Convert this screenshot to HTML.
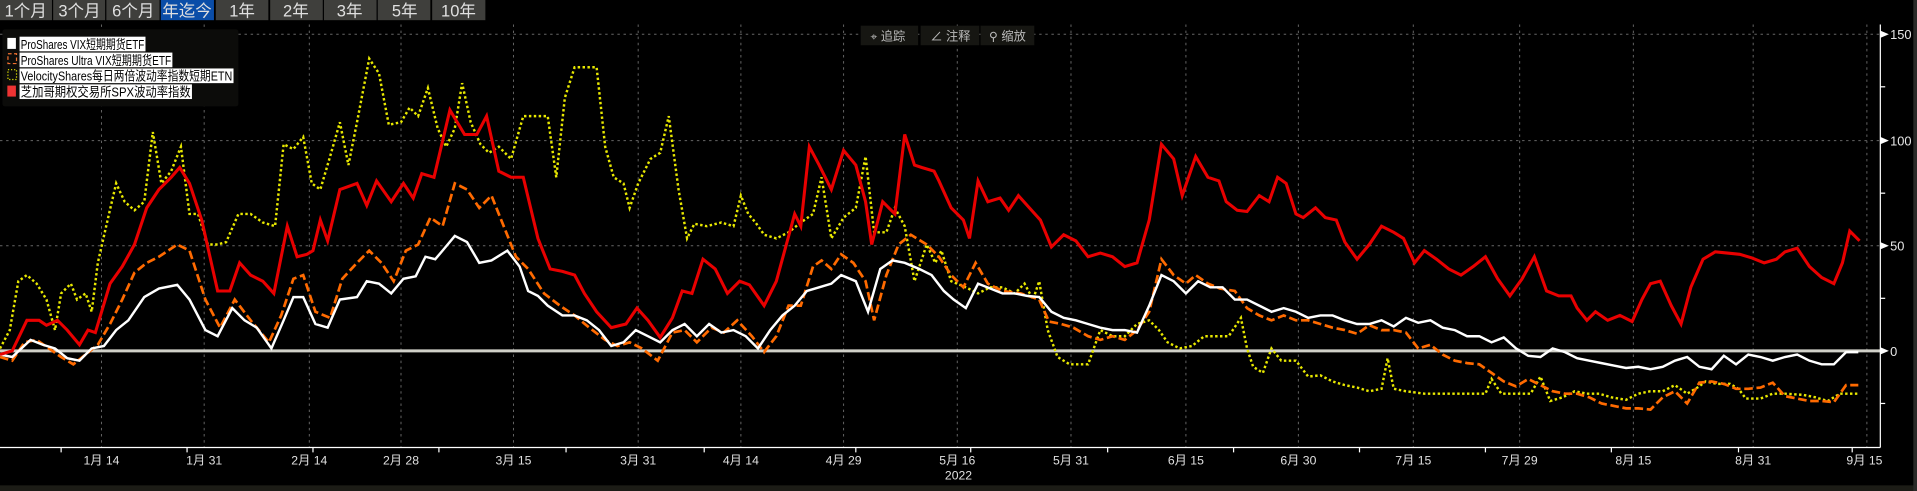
<!DOCTYPE html>
<html><head><meta charset="utf-8"><style>
html,body{margin:0;padding:0;background:#000;overflow:hidden}
svg{display:block}
text{font-family:"Liberation Sans","Noto Sans CJK SC",sans-serif}
</style></head><body>
<svg width="1917" height="491" viewBox="0 0 1568 401.6" preserveAspectRatio="none" xmlns="http://www.w3.org/2000/svg">
<rect width="1568" height="401.6" fill="#000"/>
<g font-size="13.5" fill="#e0e0e0" text-anchor="middle">
<rect x="0" y="0" width="42.5" height="16.5" fill="#3f3f3c"/><text x="21" y="13.5">1个月</text>
<rect x="43.5" y="0" width="42.5" height="16.5" fill="#3f3f3c"/><text x="65" y="13.5">3个月</text>
<rect x="87" y="0" width="43.5" height="16.5" fill="#3f3f3c"/><text x="109" y="13.5">6个月</text>
<rect x="131.5" y="0" width="43.5" height="16.5" fill="#0a4da8"/><text x="153" y="13.5">年迄今</text>
<rect x="176.5" y="0" width="43" height="16.5" fill="#3f3f3c"/><text x="198" y="13.5">1年</text>
<rect x="221" y="0" width="43" height="16.5" fill="#3f3f3c"/><text x="242" y="13.5">2年</text>
<rect x="265" y="0" width="43" height="16.5" fill="#3f3f3c"/><text x="286" y="13.5">3年</text>
<rect x="309" y="0" width="43" height="16.5" fill="#3f3f3c"/><text x="331" y="13.5">5年</text>
<rect x="353.5" y="0" width="43.5" height="16.5" fill="#3f3f3c"/><text x="375" y="13.5">10年</text>
</g>
<g stroke="#666" stroke-width="0.8" stroke-dasharray="2,3">
<line x1="0" y1="28" x2="1538" y2="28"/>
<line x1="0" y1="115" x2="1538" y2="115"/>
<line x1="0" y1="201" x2="1538" y2="201"/>
<line x1="83" y1="20" x2="83" y2="366"/><line x1="167" y1="20" x2="167" y2="366"/>
<line x1="253" y1="20" x2="253" y2="366"/><line x1="328" y1="20" x2="328" y2="366"/>
<line x1="420" y1="20" x2="420" y2="366"/><line x1="522" y1="20" x2="522" y2="366"/>
<line x1="606" y1="20" x2="606" y2="366"/><line x1="690" y1="20" x2="690" y2="366"/>
<line x1="783" y1="20" x2="783" y2="366"/><line x1="876" y1="20" x2="876" y2="366"/>
<line x1="970" y1="20" x2="970" y2="366"/><line x1="1062" y1="20" x2="1062" y2="366"/>
<line x1="1156" y1="20" x2="1156" y2="366"/><line x1="1243" y1="20" x2="1243" y2="366"/>
<line x1="1336" y1="20" x2="1336" y2="366"/><line x1="1434" y1="20" x2="1434" y2="366"/>
<line x1="1527" y1="20" x2="1527" y2="366"/>
</g>
<g font-size="10" fill="#bbb">
<rect x="704" y="21" width="47" height="16" fill="#161612"/><text x="712" y="33">⌖ 追踪</text>
<rect x="753" y="21" width="48" height="16" fill="#161612"/><text x="761" y="33">∠ 注释</text>
<rect x="802" y="21" width="44" height="16" fill="#161612"/><text x="809" y="33">⚲ 缩放</text>
</g>
<line x1="0" y1="287" x2="1538" y2="287" stroke="#d0d0c8" stroke-width="2.4"/>
<polyline fill="none" stroke="#e8e800" stroke-width="2" stroke-dasharray="2,2" points="0,285 8,270 15,230 22,225 30,232 38,245 45,270 50,240 58,232 63,245 70,240 75,255 80,215 88,180 95,150 102,165 110,172 118,165 125,108 132,150 140,140 148,120 155,175 162,175 170,200 178,200 185,198 195,175 205,175 215,182 225,185 232,118 240,122 248,112 255,150 262,155 270,128 278,100 285,135 292,100 302,48 310,60 318,102 328,100 335,88 342,95 350,72 358,105 365,120 372,105 378,68 385,100 393,118 400,125 408,120 418,130 428,95 438,95 448,95 455,145 462,80 470,55 478,55 488,55 495,120 502,145 510,150 515,170 522,150 532,130 540,125 547,95 555,155 562,195 568,183 578,185 590,182 600,185 606,160 612,175 618,182 625,192 635,195 645,190 655,182 665,175 672,145 680,195 690,178 700,170 708,128 715,190 725,190 732,170 740,185 748,230 758,200 765,215 770,205 778,230 790,235 800,240 810,235 820,235 830,240 838,232 845,245 850,230 857,270 865,292 875,298 890,298 900,270 910,275 920,275 930,265 940,262 948,270 955,280 965,285 975,283 985,275 995,275 1005,275 1015,260 1020,285 1025,300 1033,305 1040,285 1048,295 1060,295 1070,308 1080,307 1090,312 1100,315 1110,317 1120,320 1130,318 1135,293 1140,318 1150,320 1165,322 1180,322 1200,322 1215,322 1220,310 1228,322 1240,322 1252,322 1260,308 1268,328 1278,325 1288,320 1298,322 1308,322 1318,325 1330,327 1340,322 1350,320 1360,320 1370,315 1380,322 1390,316 1395,312 1405,314 1415,314 1422,318 1428,326 1440,326 1450,322 1460,322 1475,323 1485,325 1495,328 1505,322 1520,322"/>
<polyline fill="none" stroke="#ff6a00" stroke-width="2.2" stroke-dasharray="7,3" points="0,292 10,295 20,280 30,278 40,285 50,292 60,298 70,290 80,282 90,265 100,245 110,223 120,215 130,210 145,200 155,205 168,245 180,268 192,245 205,262 220,280 230,258 240,228 248,225 258,255 270,260 280,228 292,215 302,205 312,215 322,230 332,205 342,200 352,178 362,185 372,150 382,155 392,170 402,160 412,185 422,210 432,220 445,240 458,250 470,258 482,268 495,278 505,283 515,280 525,285 538,295 550,272 560,270 570,280 582,268 592,272 603,262 615,275 625,288 635,275 645,250 655,250 665,218 672,213 680,220 688,208 698,215 708,230 715,262 725,225 735,200 745,192 758,200 768,210 778,225 788,235 798,215 808,232 820,238 835,240 850,245 858,263 868,265 878,268 890,275 900,278 910,275 920,278 930,270 940,255 950,212 960,225 970,232 978,225 988,232 998,236 1010,238 1020,252 1030,258 1040,262 1050,258 1060,262 1070,262 1080,265 1090,268 1100,270 1110,273 1120,266 1130,270 1140,270 1150,272 1160,285 1170,282 1180,290 1190,295 1200,297 1210,298 1220,305 1230,312 1240,316 1250,310 1260,315 1270,320 1280,322 1290,322 1300,325 1310,330 1320,332 1330,334 1340,334 1350,335 1360,325 1370,320 1380,330 1390,313 1400,312 1410,314 1420,318 1430,318 1440,317 1450,313 1460,324 1470,326 1480,328 1490,328 1500,329 1510,315 1520,315"/>
<polyline fill="none" stroke="#fff" stroke-width="2" points="0,290 10,292 25,278 35,282 45,285 55,293 65,295 75,285 85,283 95,270 105,262 118,243 130,236 145,233 155,245 168,270 178,275 190,252 200,262 210,268 222,285 232,262 240,243 248,243 258,265 268,268 278,245 292,243 300,230 310,232 320,240 330,228 340,226 348,210 356,212 362,205 372,193 382,198 392,215 402,213 415,205 425,218 432,238 440,242 448,250 460,258 470,258 480,262 490,270 500,283 510,280 520,270 530,275 540,280 550,270 560,265 570,275 580,265 590,272 600,270 610,275 620,285 630,270 640,258 650,250 660,238 670,235 680,232 688,225 700,230 710,255 720,220 730,213 740,215 752,220 762,225 772,238 780,245 790,252 800,232 810,236 820,240 830,240 840,242 850,243 860,255 870,260 880,262 890,265 900,268 910,270 920,270 930,272 940,250 950,225 960,230 970,240 980,230 990,235 1000,235 1010,245 1020,245 1030,250 1040,255 1050,252 1060,255 1070,260 1080,258 1090,258 1100,262 1110,265 1120,265 1130,262 1140,267 1150,260 1160,264 1170,262 1180,268 1190,270 1200,275 1210,275 1220,280 1230,276 1240,285 1250,291 1260,292 1270,285 1280,288 1290,293 1300,295 1310,297 1320,299 1330,301 1340,300 1350,302 1360,300 1370,295 1380,292 1390,300 1400,302 1410,291 1420,298 1430,290 1440,292 1450,295 1460,292 1470,290 1480,295 1490,298 1500,298 1510,288 1520,288"/>
<polyline fill="none" stroke="#e80000" stroke-width="2.5" points="0,290 10,287 22,262 32,262 38,266 47,262 55,270 65,282 72,270 78,272 90,232 100,218 110,200 120,170 130,155 140,145 147,137 155,150 165,180 178,238 188,238 196,215 205,225 215,230 224,240 235,185 243,210 251,208 256,205 262,180 268,197 278,155 292,150 300,168 308,148 320,165 330,150 338,162 345,142 355,145 368,90 380,110 390,110 398,95 408,140 418,145 428,145 440,195 450,220 460,222 470,225 478,240 488,255 500,268 512,265 521,252 530,262 540,276 550,260 558,238 566,240 575,212 585,220 595,240 605,230 613,233 625,250 635,230 650,175 655,185 662,120 670,135 680,155 690,123 700,135 708,165 713,200 722,165 732,175 740,110 748,135 754,137 764,140 768,148 778,170 788,180 793,195 800,148 808,165 818,162 825,172 833,160 842,170 851,180 860,202 870,192 880,197 890,210 900,207 910,210 920,218 930,215 940,180 950,118 960,130 967,160 978,128 988,145 997,148 1003,165 1012,172 1020,173 1030,160 1038,165 1045,145 1052,150 1060,175 1066,178 1076,170 1084,178 1093,180 1100,198 1110,212 1120,200 1130,185 1140,190 1148,195 1157,215 1165,205 1175,212 1185,220 1195,225 1205,218 1215,210 1225,228 1235,242 1245,228 1255,210 1265,238 1275,242 1285,242 1290,252 1298,262 1305,255 1315,262 1325,258 1335,263 1343,245 1350,232 1358,230 1367,250 1375,265 1383,235 1393,212 1403,206 1413,207 1423,208 1433,211 1443,215 1453,212 1460,206 1470,203 1480,218 1490,227 1500,232 1507,215 1513,189 1521,197"/>
<rect x="2" y="24" width="193" height="63" rx="2" fill="#0c0c0a"/>
<g font-size="10.5" fill="#000">
<rect x="6" y="31" width="7" height="9" fill="#fff"/>
<rect x="16" y="30" width="103" height="12" fill="#fff"/><text x="17" y="40" textLength="101" lengthAdjust="spacingAndGlyphs">ProShares VIX短期期货ETF</text>
<rect x="6.5" y="44" width="7" height="8" fill="none" stroke="#f07030" stroke-dasharray="3,2"/>
<rect x="16" y="43" width="125" height="12" fill="#fff"/><text x="17" y="53" textLength="123" lengthAdjust="spacingAndGlyphs">ProShares Ultra VIX短期期货ETF</text>
<rect x="6.5" y="57" width="7" height="8" fill="none" stroke="#e8e800" stroke-dasharray="1,1.5"/>
<rect x="16" y="56" width="175" height="12" fill="#fff"/><text x="17" y="66" textLength="173" lengthAdjust="spacingAndGlyphs">VelocityShares每日两倍波动率指数短期ETN</text>
<rect x="6" y="70" width="7" height="9" fill="#ee3333"/>
<rect x="16" y="69" width="141" height="12" fill="#fff"/><text x="17" y="79" textLength="139" lengthAdjust="spacingAndGlyphs">芝加哥期权交易所SPX波动率指数</text>
</g>
<g stroke="#fff" stroke-width="1">
<line x1="1538" y1="20" x2="1538" y2="366"/>
<line x1="1538" y1="71" x2="1542" y2="71"/><line x1="1538" y1="158" x2="1542" y2="158"/>
<line x1="1538" y1="244" x2="1542" y2="244"/><line x1="1538" y1="330" x2="1542" y2="330"/>
<line x1="0" y1="366" x2="1538" y2="366"/>
</g>
<g fill="#fff"><path d="M1538,25 l7,3 l-7,3z"/><path d="M1538,112 l7,3 l-7,3z"/><path d="M1538,198 l7,3 l-7,3z"/><path d="M1538,284 l7,3 l-7,3z"/></g>
<g font-size="10.5" fill="#e8e8e8">
<text x="1546" y="32">150</text><text x="1546" y="119">100</text><text x="1546" y="205">50</text><text x="1546" y="291">0</text>
</g>
<g stroke="#fff" stroke-width="1">
<line x1="50" y1="366" x2="50" y2="370"/><line x1="153" y1="366" x2="153" y2="370"/><line x1="256" y1="366" x2="256" y2="370"/><line x1="359" y1="366" x2="359" y2="370"/><line x1="463" y1="366" x2="463" y2="370"/><line x1="576" y1="366" x2="576" y2="370"/><line x1="700" y1="366" x2="700" y2="370"/><line x1="794" y1="366" x2="794" y2="370"/><line x1="906" y1="366" x2="906" y2="370"/><line x1="1009" y1="366" x2="1009" y2="370"/><line x1="1112" y1="366" x2="1112" y2="370"/><line x1="1215" y1="366" x2="1215" y2="370"/><line x1="1318" y1="366" x2="1318" y2="370"/><line x1="1422" y1="366" x2="1422" y2="370"/><line x1="1515" y1="366" x2="1515" y2="370"/>
</g>
<g font-size="10" fill="#e0e0e0" text-anchor="middle">
<text x="83" y="380">1月 14</text><text x="167" y="380">1月 31</text><text x="253" y="380">2月 14</text><text x="328" y="380">2月 28</text><text x="420" y="380">3月 15</text><text x="522" y="380">3月 31</text><text x="606" y="380">4月 14</text><text x="690" y="380">4月 29</text><text x="783" y="380">5月 16</text><text x="876" y="380">5月 31</text><text x="970" y="380">6月 15</text><text x="1062" y="380">6月 30</text><text x="1156" y="380">7月 15</text><text x="1243" y="380">7月 29</text><text x="1336" y="380">8月 15</text><text x="1434" y="380">8月 31</text><text x="1525" y="380">9月 15</text>
<text x="784" y="392">2022</text>
</g>
<rect x="0" y="397" width="1568" height="5" fill="#1c1c16"/>
<rect x="1565" y="0" width="3" height="401.6" fill="#2a2a28"/>
</svg>
</body></html>
